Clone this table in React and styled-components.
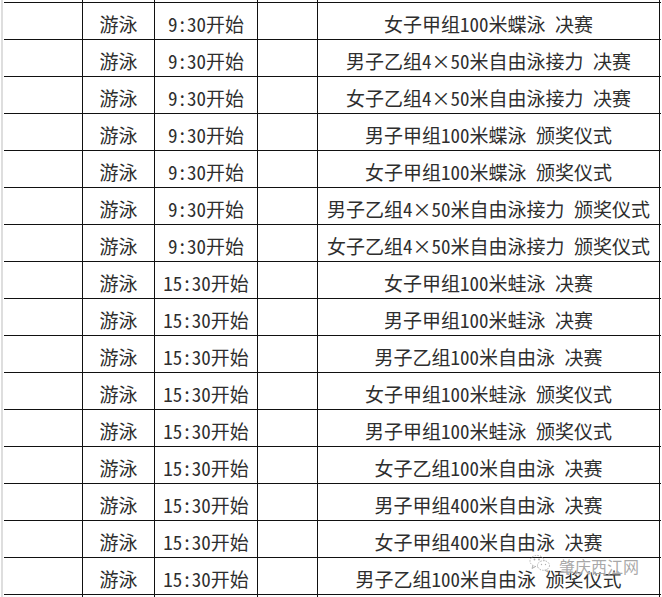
import React from "react";
import styled, { createGlobalStyle } from "styled-components";

const Global = createGlobalStyle`
  html, body { margin: 0; padding: 0; background: #fff; }
  body { width: 662px; height: 597px; overflow: hidden; }
`;

const Page = styled.div`
  position: relative;
  width: 657px;
  height: 597px;
  margin-left: 1px;
  border-left: 2px solid #dedede;
  padding-left: 1px;
  font-family: "Noto Sans CJK SC", "Noto Sans", sans-serif;
  color: #2e2e2e;
`;

const COLS = "79px 72px 103px 60px 342px";

const Row = styled.div`
  display: grid;
  grid-template-columns: ${COLS};
  height: ${(p) => (p.$first ? 38 : 37)}px;
  box-sizing: border-box;
  border-top: ${(p) => (p.$first ? "1px solid #111" : "none")};
  border-bottom: 1px solid #111;
`;

const Stub = styled.div`
  display: grid;
  grid-template-columns: ${COLS};
  height: ${(p) => p.$h}px;
`;

const Cell = styled.div`
  box-sizing: border-box;
  border-right: 1px solid #111;
  display: flex;
  align-items: center;
  justify-content: center;
  padding-top: 4px;
  font-size: 19px;
  line-height: 1;
  white-space: nowrap;
  font-feature-settings: "hwid" 1;
`;

const Watermark = styled.div`
  position: absolute;
  left: 526px;
  top: 552px;
  display: flex;
  align-items: center;
  gap: 8px;
  pointer-events: none;
`;

const MarkText = styled.span`
  font-family: "Noto Sans CJK SC", sans-serif;
  font-size: 16px;
  line-height: 1;
  color: rgba(140, 140, 140, 0.75);
  text-shadow: 0 0 2px #fff, 0 0 1px #fff;
  margin-top: 6px;
`;

const rows = [
  ["9:30开始", "女子甲组100米蝶泳 决赛"],
  ["9:30开始", "男子乙组4×50米自由泳接力 决赛"],
  ["9:30开始", "女子乙组4×50米自由泳接力 决赛"],
  ["9:30开始", "男子甲组100米蝶泳 颁奖仪式"],
  ["9:30开始", "女子甲组100米蝶泳 颁奖仪式"],
  ["9:30开始", "男子乙组4×50米自由泳接力 颁奖仪式"],
  ["9:30开始", "女子乙组4×50米自由泳接力 颁奖仪式"],
  ["15:30开始", "女子甲组100米蛙泳 决赛"],
  ["15:30开始", "男子甲组100米蛙泳 决赛"],
  ["15:30开始", "男子乙组100米自由泳 决赛"],
  ["15:30开始", "女子甲组100米蛙泳 颁奖仪式"],
  ["15:30开始", "男子甲组100米蛙泳 颁奖仪式"],
  ["15:30开始", "女子乙组100米自由泳 决赛"],
  ["15:30开始", "男子甲组400米自由泳 决赛"],
  ["15:30开始", "女子甲组400米自由泳 决赛"],
  ["15:30开始", "男子乙组100米自由泳 颁奖仪式"],
];

const StubCells = () => (
  <>
    <Cell />
    <Cell />
    <Cell />
    <Cell />
    <Cell />
  </>
);

function WeChatIcon() {
  return (
    <svg width="22" height="20" viewBox="0 0 22 20" fill="none">
      <ellipse cx="8" cy="8" rx="7" ry="5.6" stroke="#b0b0b0" strokeWidth="1" strokeDasharray="1.5 1.2" />
      <path d="M4 12.5 L3 15.5 L6.8 13.4" stroke="#b0b0b0" strokeWidth="1" />
      <ellipse cx="14.5" cy="12.5" rx="6" ry="4.8" fill="#fff" stroke="#b0b0b0" strokeWidth="1" strokeDasharray="1.5 1.2" />
      <path d="M17.5 16.6 L19 19 L15.6 17.2" stroke="#b0b0b0" strokeWidth="1" />
      <circle cx="5.5" cy="6.5" r="0.9" fill="#b0b0b0" />
      <circle cx="10" cy="6.5" r="0.9" fill="#b0b0b0" />
      <circle cx="12.5" cy="11.5" r="0.7" fill="#b0b0b0" />
      <circle cx="16.5" cy="11.5" r="0.7" fill="#b0b0b0" />
    </svg>
  );
}

export default function App() {
  return (
    <>
      <Global />
      <Page>
        <Stub $h={2}>
          <StubCells />
        </Stub>
        {rows.map(([time, event], i) => (
          <Row key={i} $first={i === 0}>
            <Cell />
            <Cell>游泳</Cell>
            <Cell>{time}</Cell>
            <Cell />
            <Cell>{event}</Cell>
          </Row>
        ))}
        <Stub $h={3}>
          <StubCells />
        </Stub>
        <Watermark>
          <WeChatIcon />
          <MarkText>肇庆西江网</MarkText>
        </Watermark>
      </Page>
    </>
  );
}
